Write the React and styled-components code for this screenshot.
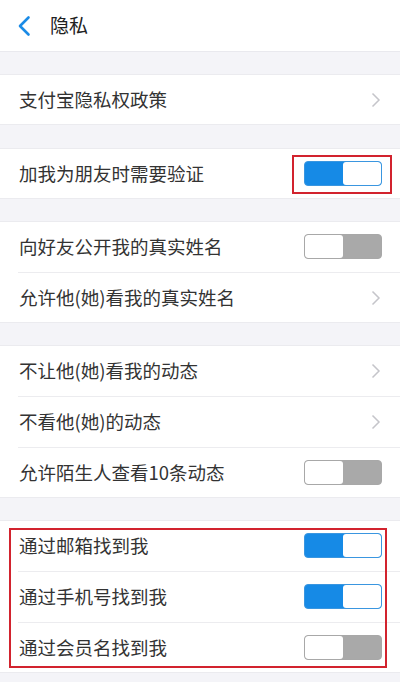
import React from "react";
import styled, { createGlobalStyle } from "styled-components";

const GlobalStyle = createGlobalStyle`
  html, body { margin: 0; padding: 0; background: #f4f4f8; }
  body { font-family: "Noto Sans CJK SC", "Noto Sans", sans-serif; }
`;

const Page = styled.div`
  width: 400px;
  min-height: 682px;
  background: #f4f4f8;
  display: flex;
  flex-direction: column;
`;

const Header = styled.header`
  height: 52px;
  box-sizing: border-box;
  background: #fff;
  border-bottom: 1px solid #e9e9ee;
  display: flex;
  align-items: center;
  padding-left: 16px;
  gap: 18px;
`;

const Title = styled.h1`
  margin: 0;
  font-size: 19px;
  font-weight: 400;
  color: #222;
  line-height: 1;
  position: relative;
  top: -1px;
`;

const Section = styled.section`
  position: relative;
  margin-top: ${(p) => p.$gap || 22}px;
  background: #fff;
  box-shadow: inset 0 1px #ebebef, inset 0 -1px #ebebef;
  display: flex;
  flex-direction: column;
`;

const Row = styled.div`
  position: relative;
  height: 51px;
  box-sizing: border-box;
  display: flex;
  align-items: center;
  justify-content: space-between;
  padding: 0 18px 0 19px;
  & + &::before {
    content: "";
    position: absolute;
    top: 0;
    left: 18px;
    right: 0;
    height: 1px;
    background: #ececef;
  }
`;

const Label = styled.span`
  font-size: 18.5px;
  color: #333;
  line-height: 1;
`;

const ToggleWrap = styled.div`
  position: relative;
  display: flex;
`;

const Toggle = styled.div`
  width: 78px;
  height: 25px;
  box-sizing: border-box;
  border-radius: 4px;
  border: 1px solid ${(p) => (p.$on ? "#3a96e0" : "#a8a8a8")};
  background: ${(p) => (p.$on ? "#168ae6" : "#a9a9a9")};
  display: flex;
  justify-content: ${(p) => (p.$on ? "flex-end" : "flex-start")};
  overflow: hidden;
`;

const Knob = styled.div`
  width: 38px;
  height: 100%;
  background: #fff;
  border-radius: 3px;
`;

const Highlight = styled.div`
  position: absolute;
  border: 2px solid #d2232e;
  pointer-events: none;
  top: ${(p) => p.$t}px;
  left: ${(p) => p.$l}px;
  right: ${(p) => p.$r}px;
  bottom: ${(p) => p.$b}px;
`;

const BackIcon = () => (
  <svg width="16" height="22" viewBox="0 0 16 22">
    <path d="M12.5 2.5 L4 11 L12.5 19.5" fill="none" stroke="#1b8be6" strokeWidth="2.6" strokeLinecap="round" strokeLinejoin="round" />
  </svg>
);

const Chevron = () => (
  <svg width="10" height="16" viewBox="0 0 10 16" style={{ marginRight: 1 }}>
    <path d="M1.5 1.5 L8 8 L1.5 14.5" fill="none" stroke="#c5c5ca" strokeWidth="1.5" />
  </svg>
);

const Switch = ({ on, marked }) => (
  <ToggleWrap>
    <Toggle $on={on}>
      <Knob />
    </Toggle>
    {marked && <Highlight $t={-6} $l={-12} $r={-10} $b={-8} />}
  </ToggleWrap>
);

const Item = ({ label, kind, on, marked }) => (
  <Row>
    <Label>{label}</Label>
    {kind === "link" ? <Chevron /> : <Switch on={on} marked={marked} />}
  </Row>
);

export default function App() {
  return (
    <>
      <GlobalStyle />
      <Page>
        <Header>
          <BackIcon />
          <Title>隐私</Title>
        </Header>
        <Section $gap={22}>
          <Item label="支付宝隐私权政策" kind="link" />
        </Section>
        <Section $gap={23}>
          <Item label="加我为朋友时需要验证" kind="switch" on marked />
        </Section>
        <Section>
          <Item label="向好友公开我的真实姓名" kind="switch" on={false} />
          <Item label="允许他(她)看我的真实姓名" kind="link" />
        </Section>
        <Section>
          <Item label="不让他(她)看我的动态" kind="link" />
          <Item label="不看他(她)的动态" kind="link" />
          <Item label="允许陌生人查看10条动态" kind="switch" on={false} />
        </Section>
        <Section>
          <Item label="通过邮箱找到我" kind="switch" on />
          <Item label="通过手机号找到我" kind="switch" on />
          <Item label="通过会员名找到我" kind="switch" on={false} />
          <Highlight $t={8} $l={9} $r={13} $b={5} />
        </Section>
      </Page>
    </>
  );
}
